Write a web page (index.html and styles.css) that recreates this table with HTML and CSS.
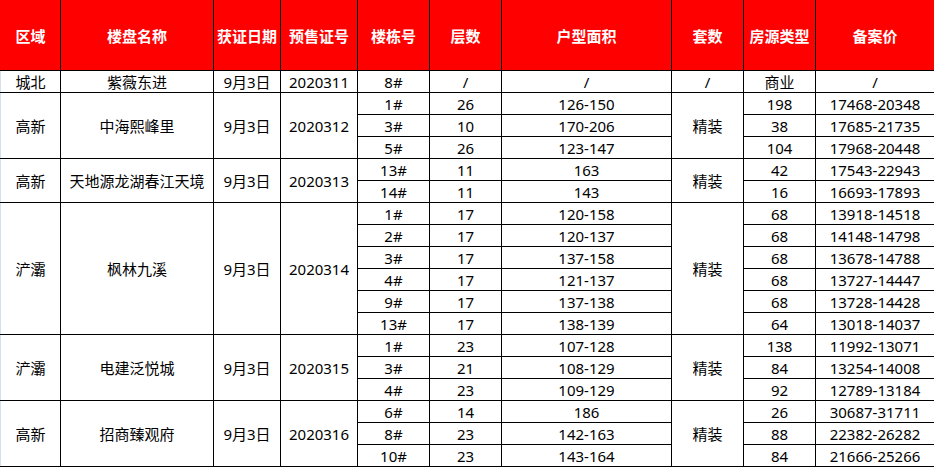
FILE: index.html
```html
<!DOCTYPE html>
<html lang="zh">
<head>
<meta charset="utf-8">
<link rel="stylesheet" href="styles.css">
</head>
<body>
<table class="sheet">
  <colgroup>
    <col class="c-area"><col class="c-name"><col class="c-date"><col class="c-permit"><col class="c-bldg">
    <col class="c-floor"><col class="c-size"><col class="c-suite"><col class="c-type"><col class="c-price">
  </colgroup>
  <thead>
    <tr class="head">
      <th class="first">区域</th><th>楼盘名称</th><th>获证日期</th><th>预售证号</th><th>楼栋号</th>
      <th>层数</th><th>户型面积</th><th>套数</th><th>房源类型</th><th>备案价</th>
    </tr>
  </thead>
  <tbody>
    <tr><td class="first">城北</td><td>紫薇东进</td><td>9月3日</td><td>2020311</td><td>8#</td><td>/</td><td>/</td><td>/</td><td>商业</td><td>/</td></tr>

    <tr><td class="first" rowspan="3">高新</td><td rowspan="3">中海熙峰里</td><td rowspan="3">9月3日</td><td rowspan="3">2020312</td><td>1#</td><td>26</td><td>126-150</td><td rowspan="3">精装</td><td>198</td><td>17468-20348</td></tr>
    <tr><td>3#</td><td>10</td><td>170-206</td><td>38</td><td>17685-21735</td></tr>
    <tr><td>5#</td><td>26</td><td>123-147</td><td>104</td><td>17968-20448</td></tr>

    <tr><td class="first" rowspan="2">高新</td><td rowspan="2">天地源龙湖春江天境</td><td rowspan="2">9月3日</td><td rowspan="2">2020313</td><td>13#</td><td>11</td><td>163</td><td rowspan="2">精装</td><td>42</td><td>17543-22943</td></tr>
    <tr><td>14#</td><td>11</td><td>143</td><td>16</td><td>16693-17893</td></tr>

    <tr><td class="first" rowspan="6">浐灞</td><td rowspan="6">枫林九溪</td><td rowspan="6">9月3日</td><td rowspan="6">2020314</td><td>1#</td><td>17</td><td>120-158</td><td rowspan="6">精装</td><td>68</td><td>13918-14518</td></tr>
    <tr><td>2#</td><td>17</td><td>120-137</td><td>68</td><td>14148-14798</td></tr>
    <tr><td>3#</td><td>17</td><td>137-158</td><td>68</td><td>13678-14788</td></tr>
    <tr><td>4#</td><td>17</td><td>121-137</td><td>68</td><td>13727-14447</td></tr>
    <tr><td>9#</td><td>17</td><td>137-138</td><td>68</td><td>13728-14428</td></tr>
    <tr><td>13#</td><td>17</td><td>138-139</td><td>64</td><td>13018-14037</td></tr>

    <tr><td class="first" rowspan="3">浐灞</td><td rowspan="3">电建泛悦城</td><td rowspan="3">9月3日</td><td rowspan="3">2020315</td><td>1#</td><td>23</td><td>107-128</td><td rowspan="3">精装</td><td>138</td><td>11992-13071</td></tr>
    <tr><td>3#</td><td>21</td><td>108-129</td><td>84</td><td>13254-14008</td></tr>
    <tr><td>4#</td><td>23</td><td>109-129</td><td>92</td><td>12789-13184</td></tr>

    <tr><td class="first" rowspan="3">高新</td><td rowspan="3">招商臻观府</td><td rowspan="3">9月3日</td><td rowspan="3">2020316</td><td>6#</td><td>14</td><td>186</td><td rowspan="3">精装</td><td>26</td><td>30687-31711</td></tr>
    <tr><td>8#</td><td>23</td><td>142-163</td><td>88</td><td>22382-26282</td></tr>
    <tr><td>10#</td><td>23</td><td>143-164</td><td>84</td><td>21666-25266</td></tr>
  </tbody>
</table>
</body>
</html>
```

FILE: styles.css
```css
html, body {
  margin: 0;
  padding: 0;
  background: #ffffff;
}

.sheet {
  border-collapse: collapse;
  table-layout: fixed;
  width: 934px;
  font-family: "Noto Sans", "Noto Sans CJK SC", sans-serif;
  font-size: 15px;
  color: #000000;
}

.c-area { width: 60px; }
.c-name { width: 153px; }
.c-date { width: 67px; }
.c-permit { width: 77px; }
.c-bldg { width: 72px; }
.c-floor { width: 72px; }
.c-size { width: 170px; }
.c-suite { width: 72px; }
.c-type { width: 72px; }
.c-price { width: 119px; }

.sheet th,
.sheet td {
  border: 1px solid #000000;
  padding: 0;
  text-align: center;
  vertical-align: middle;
  white-space: nowrap;
  overflow: hidden;
  line-height: 20px;
}

.sheet td {
  height: 21px;
}

.head th {
  background: #ff0000;
  color: #ffffff;
  font-weight: bold;
  height: 69px;
  border-top-color: #ff0000;
}

.sheet td.first {
  border-left-color: #d6dfec;
}

.head th.first {
  border-left-color: #ff0000;
}
```
